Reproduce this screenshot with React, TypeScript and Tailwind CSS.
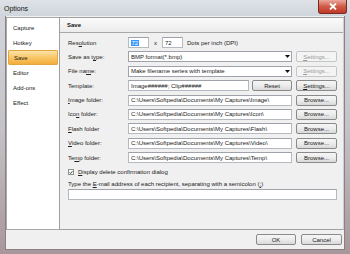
import React from "react";

const U = ({ children }: { children: React.ReactNode }) => <span className="underline underline-offset-[1px]">{children}</span>;

function Btn({ children, disabled, w }: { children: React.ReactNode; disabled?: boolean; w: string }) {
  return (
    <div
      className={`${w} h-[11px] shrink-0 flex items-center justify-center rounded-[2px] border text-[6px] leading-none ${
        disabled
          ? "border-[#c3c6c9] bg-[#f4f4f4] text-[#9a9a9a]"
          : "border-[#8a8a8a] bg-gradient-to-b from-[#f6f6f6] via-[#ececec] to-[#d9d9d9] text-[#1a1a1a]"
      }`}
    >
      {children}
    </div>
  );
}

function Field({ children, className = "" }: { children?: React.ReactNode; className?: string }) {
  return (
    <div
      className={`h-[11px] bg-white border border-[#b5b9c0] border-t-[#9ea3ab] flex items-center pl-[2px] text-[6px] leading-none text-[#222] whitespace-nowrap overflow-hidden ${className}`}
    >
      {children}
    </div>
  );
}

function Select({ children }: { children: React.ReactNode }) {
  return (
    <div className="flex-1 h-[11px] bg-white border border-[#9ea3ab] flex items-center text-[6px] leading-none text-[#222] whitespace-nowrap overflow-hidden">
      <span className="flex-1 pl-[2px]">{children}</span>
      <div className="w-[8px] h-full flex items-center justify-center">
        <svg width="5" height="3" viewBox="0 0 5 3">
          <path d="M0 0 H5 L2.5 3 Z" fill="#111" />
        </svg>
      </div>
    </div>
  );
}

function Row({ label, children }: { label: React.ReactNode; children: React.ReactNode }) {
  return (
    <div className="flex items-center h-[11px]">
      <div className="w-[60px] shrink-0 text-[6px] leading-none text-[#222] whitespace-nowrap">{label}</div>
      <div className="flex-1 flex items-center gap-[4px]">{children}</div>
    </div>
  );
}

export default function App() {
  const items = ["Capture", "Hotkey", "Save", "Editor", "Add-ons", "Effect"];
  const folders: [React.ReactNode, string][] = [
    [<><U>I</U>mage folder:</>, "C:\\Users\\Softpedia\\Documents\\My Captures\\Image\\"],
    [<>Ico<U>n</U> folder:</>, "C:\\Users\\Softpedia\\Documents\\My Captures\\Icon\\"],
    [<><U>F</U>lash folder</>, "C:\\Users\\Softpedia\\Documents\\My Captures\\Flash\\"],
    [<><U>V</U>ideo folder:</>, "C:\\Users\\Softpedia\\Documents\\My Captures\\Video\\"],
    [<>Te<U>m</U>p folder:</>, "C:\\Users\\Softpedia\\Documents\\My Captures\\Temp\\"],
  ];
  return (
    <div className="w-[350px] h-[254px] overflow-hidden flex flex-col font-['Liberation_Sans',Arial,sans-serif] bg-gradient-to-b from-[#d3d8de] via-[#c4c3c8] to-[#a8979a]">
      {/* Title bar */}
      <div className="relative h-[16px] shrink-0 flex items-center pl-[4px] bg-gradient-to-b from-[#dfe3e8] to-[#cfd5dc]">
        <span className="text-[7px] leading-none text-[#111]">Options</span>
        <div className="absolute right-[3px] top-0 w-[29px] h-[14px] rounded-b-[3px] border border-t-0 border-[#7b2a22] bg-gradient-to-b from-[#e9a89c] via-[#d05a46] to-[#c0392b] flex items-center justify-center">
          <svg width="8" height="7" viewBox="0 0 8 7">
            <path d="M1 0.5 L7 6.5 M7 0.5 L1 6.5" stroke="#fff" strokeWidth="1.8" />
          </svg>
        </div>
      </div>
      {/* Client */}
      <div className="flex-1 flex px-[5px] pb-[4px]">
        <div className="flex-1 bg-[#f0f0f0] flex flex-col border border-[#8d8084] border-t-0">
          <div className="h-[214px] flex pt-[1px]">
            {/* list */}
            <div className="w-[53px] ml-[0px] bg-white border border-[#a9a9a9] border-r-0 flex flex-col pt-[2px] px-[1px]">
              {items.map((it) => (
                <div
                  key={it}
                  className={`h-[15px] flex items-center pl-[5px] text-[6px] leading-none text-[#1a1a1a] ${
                    it === "Save" ? "bg-gradient-to-b from-[#fde2a8] via-[#f9c766] to-[#f3ae3b] border border-[#e3a53e] rounded-[1px]" : ""
                  }`}
                >
                  {it}
                </div>
              ))}
            </div>
            {/* panel */}
            <div className="flex-1 flex flex-col border border-[#a0a0a0] border-r-[#cfcfcf] mr-[0px]">
              <div className="h-[15px] shrink-0 flex items-center pl-[7px] bg-gradient-to-b from-[#fafafa] to-[#ececec] border-b border-[#a8a8a8]">
                <span className="text-[6px] font-bold leading-none text-[#111]">Save</span>
              </div>
              <div className="flex-1 flex flex-col pl-[8px] pr-[6px] pt-[4px] gap-[3.4px]">
                <Row label={<>Res<U>o</U>lution</>}>
                  <Field className="w-[21px]">
                    <span className="bg-[#3399ff] text-white px-[0.5px]">72</span>
                  </Field>
                  <span className="text-[6px] leading-none text-[#222] mx-[1px]">x</span>
                  <Field className="w-[21px]">72</Field>
                  <span className="text-[6px] leading-none text-[#222] whitespace-nowrap">Dots per inch (DPI)</span>
                </Row>
                <Row label={<>Save as t<U>y</U>pe:</>}>
                  <Select>BMP format(*.bmp)</Select>
                  <Btn disabled w="w-[41px]"><U>S</U>ettings...</Btn>
                </Row>
                <Row label={<>File na<U>m</U>e:</>}>
                  <Select>Make filename series with template</Select>
                  <Btn disabled w="w-[41px]"><U>S</U>ettings...</Btn>
                </Row>
                <Row label={<>Template:</>}>
                  <Field className="flex-1">Image######; Clip######</Field>
                  <div className="-ml-[1px]"><Btn w="w-[40px]">Reset</Btn></div>
                  <Btn w="w-[41px]"><U>S</U>ettings...</Btn>
                </Row>
                {folders.map(([l, v], i) => (
                  <Row key={i} label={l}>
                    <Field className="flex-1">{v}</Field>
                    <Btn w="w-[41px]">Browse...</Btn>
                  </Row>
                ))}
                <div className="flex items-center h-[11px] gap-[4px] mt-[0px]">
                  <div className="w-[6px] h-[6px] bg-white border border-[#8e8f8f] flex items-center justify-center">
                    <svg width="5" height="5" viewBox="0 0 5 5">
                      <path d="M0.6 2.4 L2 3.8 L4.4 0.8" stroke="#222" strokeWidth="1" fill="none" />
                    </svg>
                  </div>
                  <span className="text-[6px] leading-none text-[#222]"><U>D</U>isplay delete confirmation dialog</span>
                </div>
                <div className="text-[6px] leading-none text-[#222] whitespace-nowrap mt-[0px]">
                  Type the <U>E</U>-mail address of each recipient, separating with a semicolon (<U>;</U>)
                </div>
                <Field className="w-full -mt-[1px]" />
              </div>
            </div>
          </div>
          {/* bottom */}
          <div className="flex-1 flex items-center justify-end gap-[5px] pr-[2px]">
            <Btn w="w-[40px]">OK</Btn>
            <Btn w="w-[41px]">Cancel</Btn>
          </div>
        </div>
      </div>
    </div>
  );
}
